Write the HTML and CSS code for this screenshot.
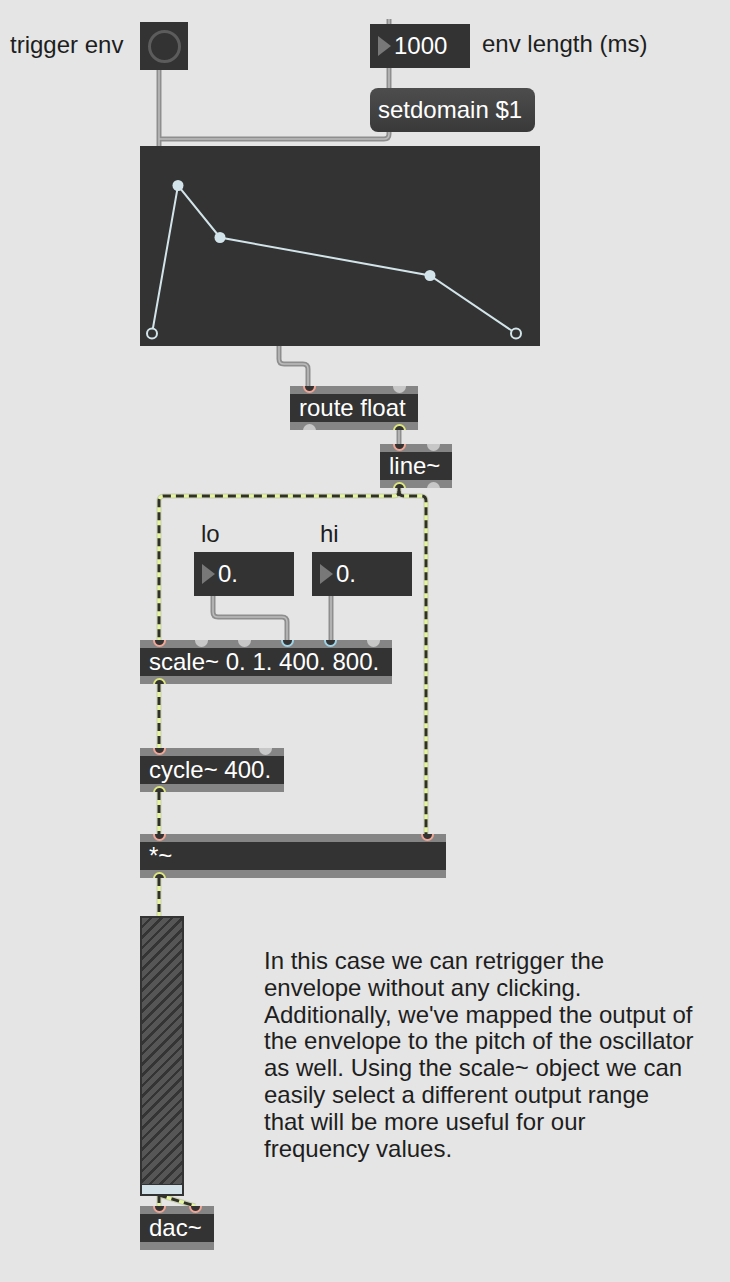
FILE: index.html
```html
<!DOCTYPE html>
<html lang="en">
<head>
  <meta charset="UTF-8">
  <title>envelope patch</title>
  <link rel="stylesheet" href="styles.css">
</head>
<body>
  <div class="patcher">
    <svg class="cords" width="730" height="1282" viewBox="0 0 730 1282">
      <defs>
        <g id="ctl-cords">
          <path d="M159 70 V146"/>
          <path d="M389 132 V134 Q389 139 384 139 H159"/>
          <path d="M389 19 V24"/>
          <path d="M389 68 V88"/>
          <path d="M279 346 V359 Q279 364 284 364 H303 Q308 364 308 369 V386"/>
          <path d="M399 430 V444"/>
          <path d="M213 596 V612 Q213 617 218 617 H282 Q287 617 287 622 V640"/>
          <path d="M331 596 V640"/>
        </g>
        <g id="sig-cords">
          <path d="M399 488 V491 Q399 496 394 496 H164 Q159 496 159 501 V640"/>
          <path d="M399 491 Q399 496 404 496 H421 Q426 496 426 501 V834"/>
          <path d="M159 684 V748"/>
          <path d="M159 792 V834"/>
          <path d="M159 878 V916"/>
          <path d="M159 1195 V1206"/>
          <path d="M159 1195 L195 1206"/>
        </g>
      </defs>
      <use href="#ctl-cords" class="ctl-edge"/>
      <use href="#ctl-cords" class="ctl-core"/>
      <use href="#sig-cords" class="sig-edge"/>
      <use href="#sig-cords" class="sig-core"/>
      <use href="#sig-cords" class="sig-dash"/>
    </svg>

    <div class="label l-trigger">trigger env</div>
    <div class="bang"><span class="ring"></span></div>

    <div class="num n-len"><span class="tri"></span><span class="val">1000</span></div>
    <div class="label l-len">env length (ms)</div>
    <div class="msg">setdomain $1</div>

    <div class="function">
      <svg width="400" height="200" viewBox="0 0 400 200">
        <polyline points="12,187.5 38,39.5 80,91.5 290,129.5 376,187.5"/>
        <circle class="dot" cx="38" cy="39.5" r="5.5"/>
        <circle class="dot" cx="80" cy="91.5" r="5.5"/>
        <circle class="dot" cx="290" cy="129.5" r="5.5"/>
        <circle class="end" cx="12" cy="187.5" r="5"/>
        <circle class="end" cx="376" cy="187.5" r="5"/>
      </svg>
    </div>

    <div class="obj o-route">
      <span class="port in pl pink"></span><span class="port in pr off"></span>
      <div class="txt">route float</div>
      <span class="port out pl off"></span><span class="port out pr yellow"></span>
    </div>

    <div class="obj o-line">
      <span class="port in pl pink"></span><span class="port in pr off"></span>
      <div class="txt">line~</div>
      <span class="port out pl yellow"></span><span class="port out pr off"></span>
    </div>

    <div class="label l-lo">lo</div>
    <div class="label l-hi">hi</div>
    <div class="num n-lo"><span class="tri"></span><span class="val">0.</span></div>
    <div class="num n-hi"><span class="tri"></span><span class="val">0.</span></div>

    <div class="obj o-scale">
      <span class="port in pl pink"></span>
      <span class="port in s2 off"></span>
      <span class="port in s3 off"></span>
      <span class="port in s4 blue"></span>
      <span class="port in s5 blue"></span>
      <span class="port in pr off"></span>
      <div class="txt">scale~ 0. 1. 400. 800.</div>
      <span class="port out pl yellow"></span>
    </div>

    <div class="obj o-cycle">
      <span class="port in pl pink"></span><span class="port in pr off"></span>
      <div class="txt">cycle~ 400.</div>
      <span class="port out pl yellow"></span>
    </div>

    <div class="obj o-times">
      <span class="port in pl pink"></span><span class="port in pr pink"></span>
      <div class="txt">*~</div>
      <span class="port out pl yellow"></span>
    </div>

    <div class="meter">
      <div class="stripes"></div>
      <div class="knob"></div>
    </div>

    <div class="obj o-dac">
      <span class="port in pl pink"></span><span class="port in pr pink"></span>
      <div class="txt">dac~</div>
    </div>

    <div class="comment">
      In this case we can retrigger the<br>
      envelope without any clicking.<br>
      Additionally, we've mapped the output of<br>
      the envelope to the pitch of the oscillator<br>
      as well. Using the scale~ object we can<br>
      easily select a different output range<br>
      that will be more useful for our<br>
      frequency values.
    </div>
  </div>
</body>
</html>
```

FILE: styles.css
```css
* { box-sizing: border-box; }
body { margin: 0; background: #e5e5e5; font-family: "Liberation Sans", Arial, sans-serif; font-size: 24px; color: #222; }

/* canvas: every box sits at its patch coordinates */
.patcher { position: relative; width: 730px; height: 1282px; overflow: hidden; }
.cords { position: absolute; left: 0; top: 0; }
.cords use { fill: none; }
.ctl-edge { stroke: #8e8e8e; stroke-width: 5; }
.ctl-core { stroke: #bdbdbd; stroke-width: 1.5; }
.sig-edge { stroke: #c9cdb8; stroke-width: 5; }
.sig-core { stroke: #e4f59a; stroke-width: 3; }
.sig-dash { stroke: #2f302a; stroke-width: 3; stroke-dasharray: 8 5; }

.label { position: absolute; line-height: 28px; white-space: nowrap; color: #1e1e1e; }
.l-trigger { left: 10px; top: 31px; }
.l-len { left: 482px; top: 30px; }
.l-lo { left: 201px; top: 520px; }
.l-hi { left: 320px; top: 520px; }

.bang { position: absolute; left: 140px; top: 22px; width: 48px; height: 48px; background: #333; display: flex; align-items: center; justify-content: center; }
.bang .ring { width: 33px; height: 33px; border-radius: 50%; border: 3px solid #5c5c5c; }

.num { position: absolute; width: 100px; height: 44px; background: #333; color: #fff; line-height: 44px; }
.num .tri { position: absolute; left: 8px; top: 12px; width: 0; height: 0; border-top: 10.5px solid transparent; border-bottom: 10.5px solid transparent; border-left: 13px solid #787878; }
.num .val { position: absolute; left: 24px; top: 0; }
.n-len { left: 370px; top: 24px; }
.n-lo { left: 194px; top: 552px; }
.n-hi { left: 312px; top: 552px; }

.msg { position: absolute; left: 370px; top: 88px; width: 165px; height: 44px; border-radius: 8px; background: linear-gradient(#4d4d4d, #393939); color: #fff; line-height: 44px; padding-left: 8px; }

.function { position: absolute; left: 140px; top: 146px; width: 400px; height: 200px; background: #333; }
.function svg { display: block; }
.function polyline { fill: none; stroke: #d2e4e9; stroke-width: 2; }
.function .dot { fill: #d2e4e9; }
.function .end { fill: #333; stroke: #d2e4e9; stroke-width: 2; }

/* object boxes */
.obj { position: absolute; height: 44px; background: #858585; overflow: hidden; }
.obj .txt { margin-top: 8px; height: 28px; background: #333; color: #fff; line-height: 28px; padding-left: 9px; white-space: nowrap; }
.o-route { left: 290px; top: 386px; width: 128px; }
.o-line { left: 380px; top: 444px; width: 72px; }
.o-scale { left: 140px; top: 640px; width: 252px; }
.o-cycle { left: 140px; top: 748px; width: 144px; }
.o-times { left: 140px; top: 834px; width: 306px; }
.o-dac { left: 140px; top: 1206px; width: 74px; }

.port { position: absolute; width: 13px; height: 13px; border-radius: 50%; }
.port.in { top: -6.5px; }
.port.out { bottom: -6.5px; }
.pl { left: 12.5px; }
.pr { right: 12.5px; }
.s2 { left: 55.3px; }
.s3 { left: 98.1px; }
.s4 { left: 140.9px; }
.s5 { left: 183.7px; }
.off { background: #c7c7c7; }
.pink { background: #333; border: 2px solid #f1a695; }
.blue { background: #333; border: 2px solid #9fd3e6; }
.yellow { background: #333; border: 2px solid #dce67c; }

.meter { position: absolute; left: 140px; top: 916px; width: 44px; height: 280px; border: 2px solid #333; background: #333; display: flex; flex-direction: column; }
.meter .stripes { flex: 1; background: repeating-linear-gradient(135deg, #565656 0, #565656 5px, #343434 5px, #343434 7.5px); }
.meter .knob { height: 9px; margin-top: 1px; background: #d3e2e8; }

.comment { position: absolute; left: 264px; top: 948px; line-height: 26.8px; white-space: nowrap; color: #1e1e1e; }
```
